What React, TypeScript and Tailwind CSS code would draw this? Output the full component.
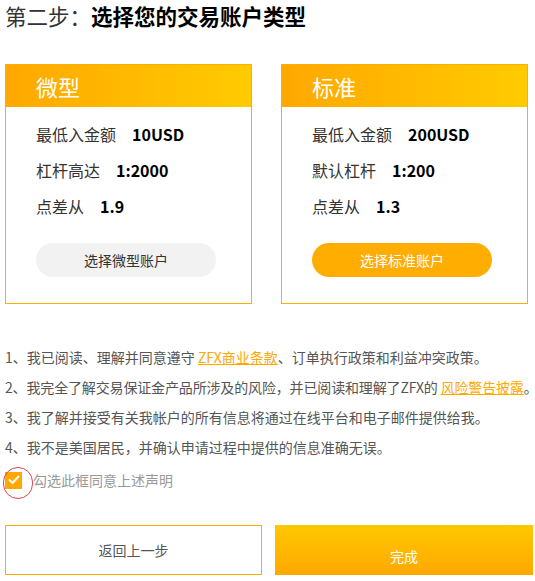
import React from "react"

const font = { fontFamily: '"Noto Sans CJK SC", "Noto Sans", sans-serif' }

type Row = { label: string; value: string }

function AccountCard({ title, rows, button, active }: { title: string; rows: Row[]; button: string; active?: boolean }) {
  return (
    <div className="w-[247px] h-[240px] shrink-0 border border-[#ffae00] flex flex-col">
      <div className="h-[42px] flex items-center pl-[30px] bg-gradient-to-r from-[#ffa800] to-[#ffcb00]">
        <span className="text-[22px] leading-none text-white">{title}</span>
      </div>
      <div className="pl-[30px] pt-[9px]">
        {rows.map((r) => (
          <div key={r.label} className="flex items-center h-[36px] text-[16px]">
            <span className="text-[#333] mr-4">{r.label}</span>
            <span className="text-black font-bold">{r.value}</span>
          </div>
        ))}
        <button
          className={
            active
              ? "mt-[19px] w-[180px] h-[34px] rounded-full bg-[#ffad00] text-white text-[14px]"
              : "mt-[19px] w-[180px] h-[34px] rounded-full bg-[#f2f2f2] text-[#333] text-[14px]"
          }
        >
          {button}
        </button>
      </div>
    </div>
  )
}

export default function App() {
  return (
    <div className="w-[535px] h-[581px] overflow-hidden bg-white px-[5px] pt-[1px]" style={font}>
      <h1 className="text-[21.5px] leading-[30px] whitespace-nowrap">
        <span className="text-[#333] font-normal">第二步：</span>
        <span className="text-black font-bold">选择您的交易账户类型</span>
      </h1>

      <div className="mt-[33px] flex gap-[29px]">
        <AccountCard
          title="微型"
          rows={[
            { label: "最低入金额", value: "10USD" },
            { label: "杠杆高达", value: "1:2000" },
            { label: "点差从", value: "1.9" },
          ]}
          button="选择微型账户"
        />
        <AccountCard
          title="标准"
          rows={[
            { label: "最低入金额", value: "200USD" },
            { label: "默认杠杆", value: "1:200" },
            { label: "点差从", value: "1.3" },
          ]}
          button="选择标准账户"
          active
        />
      </div>

      <div className="mt-[38px] text-[14px] leading-[30px] text-[#555] whitespace-nowrap">
        <p>
          1、我已阅读、理解并同意遵守 <a className="text-[#ffa800] underline">ZFX商业条款</a>、订单执行政策和利益冲突政策。
        </p>
        <p className="tracking-[-0.15px]">
          2、我完全了解交易保证金产品所涉及的风险，并已阅读和理解了ZFX的 <a className="text-[#ffa800] underline">风险警告披露</a>。
        </p>
        <p>3、我了解并接受有关我帐户的所有信息将通过在线平台和电子邮件提供给我。</p>
        <p>4、我不是美国居民，并确认申请过程中提供的信息准确无误。</p>
      </div>

      <div className="mt-[3px] h-[30px] flex items-center">
        <div className="relative w-[17px] h-[17px] shrink-0 bg-[#ffa800] flex items-center justify-center">
          <svg width="12" height="10" viewBox="0 0 12 10" fill="none">
            <path d="M1.5 5l3 3 6-6.5" stroke="white" strokeWidth="2" strokeLinecap="round" strokeLinejoin="round" />
          </svg>
          <span className="absolute left-[-2px] top-[-5px] w-[30px] h-[32px] rounded-full border border-[#e8404a]" />
        </div>
        <span className="ml-[11px] text-[14px] text-[#999]">勾选此框同意上述声明</span>
      </div>

      <div className="mt-[30px] flex">
        <button className="w-[257px] h-[50px] shrink-0 border border-[#ffae00] bg-white text-[14px] text-[#555]">返回上一步</button>
        <button className="ml-[13px] w-[258px] h-[50px] shrink-0 pt-[12px] bg-gradient-to-b from-[#ffc800] to-[#ffa800] text-[14px] text-white">
          完成
        </button>
      </div>
    </div>
  )
}
